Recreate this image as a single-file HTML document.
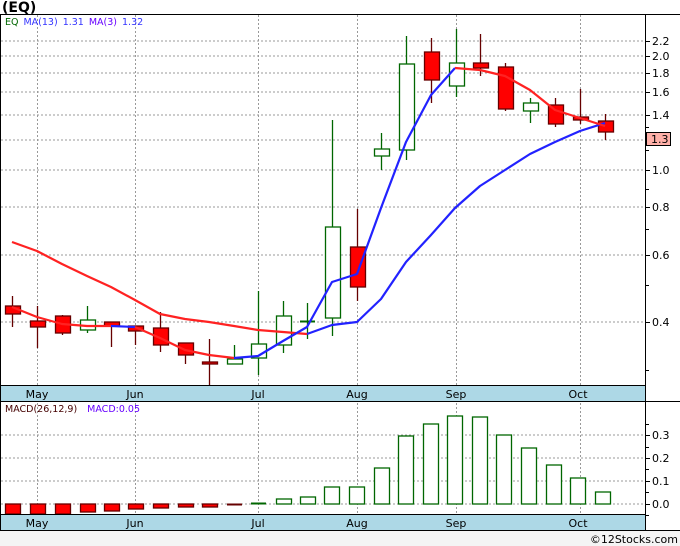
<!DOCTYPE html>
<html><head><style>
body{margin:0;background:#fff;}
svg text{font-family:"DejaVu Sans","Liberation Sans",sans-serif;}
</style></head><body>
<svg width="680" height="546" xmlns="http://www.w3.org/2000/svg" style="display:block">
<rect x="0" y="0" width="680" height="546" fill="#fff"/>
<rect x="0" y="531" width="680" height="15" fill="#f4f4f4"/>
<text x="2" y="12" font-size="14" font-weight="bold" fill="#000">(EQ)</text>
<g stroke="#999" stroke-width="1" stroke-dasharray="2,2">
<line x1="1" y1="41" x2="645" y2="41"/><line x1="1" y1="56" x2="645" y2="56"/><line x1="1" y1="73" x2="645" y2="73"/><line x1="1" y1="92" x2="645" y2="92"/><line x1="1" y1="115" x2="645" y2="115"/><line x1="1" y1="140" x2="645" y2="140"/><line x1="1" y1="170" x2="645" y2="170"/><line x1="1" y1="207" x2="645" y2="207"/><line x1="1" y1="255" x2="645" y2="255"/><line x1="1" y1="322" x2="645" y2="322"/>
<line x1="1" y1="435" x2="645" y2="435"/><line x1="1" y1="458" x2="645" y2="458"/><line x1="1" y1="481" x2="645" y2="481"/><line x1="1" y1="504" x2="645" y2="504"/>
<line x1="37.5" y1="15" x2="37.5" y2="530"/><line x1="135.5" y1="15" x2="135.5" y2="530"/><line x1="258.5" y1="15" x2="258.5" y2="530"/><line x1="357.5" y1="15" x2="357.5" y2="530"/><line x1="456.5" y1="15" x2="456.5" y2="530"/><line x1="580.5" y1="15" x2="580.5" y2="530"/>
</g>
<text x="5" y="25" font-size="9.5"><tspan fill="#060">EQ</tspan><tspan fill="#3333ff" dx="5">MA(13)</tspan><tspan fill="#3333ff" dx="5">1.31</tspan><tspan fill="#6600ff" dx="5">MA(3)</tspan><tspan fill="#3333ff" dx="5">1.32</tspan></text>
<g stroke-width="1.3">
<g stroke="#600">
<line x1="12.5" y1="296" x2="12.5" y2="327"/><rect x="5.5" y="306" width="15" height="8" fill="#f00"/>
<line x1="37.5" y1="306" x2="37.5" y2="348"/><rect x="30.5" y="321" width="15" height="6" fill="#f00"/>
<line x1="62.5" y1="315" x2="62.5" y2="335"/><rect x="55.5" y="316" width="15" height="17" fill="#f00"/>
<line x1="111.5" y1="322" x2="111.5" y2="347"/><rect x="104.5" y="322" width="15" height="4" fill="#f00"/>
<line x1="135.5" y1="326" x2="135.5" y2="345"/><rect x="128.5" y="326" width="15" height="5" fill="#f00"/>
<line x1="160.5" y1="312" x2="160.5" y2="352"/><rect x="153.5" y="328" width="15" height="17" fill="#f00"/>
<line x1="185.5" y1="343" x2="185.5" y2="364"/><rect x="178.5" y="343" width="15" height="12" fill="#f00"/>
<line x1="209.5" y1="339" x2="209.5" y2="387"/><rect x="202.5" y="362" width="15" height="2" fill="#f00"/>
<line x1="357.5" y1="209" x2="357.5" y2="301"/><rect x="350.5" y="247" width="15" height="40" fill="#f00"/>
<line x1="431.5" y1="38" x2="431.5" y2="103"/><rect x="424.5" y="52" width="15" height="28" fill="#f00"/>
<line x1="480.5" y1="34" x2="480.5" y2="76"/><rect x="473.5" y="63" width="15" height="5" fill="#f00"/>
<line x1="505.5" y1="63" x2="505.5" y2="111"/><rect x="498.5" y="67" width="15" height="42" fill="#f00"/>
<line x1="555.5" y1="98" x2="555.5" y2="127"/><rect x="548.5" y="105" width="15" height="19" fill="#f00"/>
<line x1="580.5" y1="89" x2="580.5" y2="124"/><rect x="573.5" y="117" width="15" height="3" fill="#f00"/>
<line x1="605.5" y1="114" x2="605.5" y2="140"/><rect x="598.5" y="121" width="15" height="11" fill="#f00"/>
</g>
<g stroke="#060">
<line x1="87.5" y1="306" x2="87.5" y2="333"/><rect x="80.5" y="320" width="15" height="10" fill="#fff"/>
<line x1="234.5" y1="345" x2="234.5" y2="364"/><rect x="227.5" y="359" width="15" height="5" fill="#fff"/>
<line x1="258.5" y1="291" x2="258.5" y2="375"/><rect x="251.5" y="344" width="15" height="14" fill="#fff"/>
<line x1="283.5" y1="301" x2="283.5" y2="353"/><rect x="276.5" y="316" width="15" height="29" fill="#fff"/>
<line x1="307.5" y1="303" x2="307.5" y2="339"/><line x1="300" y1="321.5" x2="315" y2="321.5" stroke-width="2"/>
<line x1="332.5" y1="120" x2="332.5" y2="336"/><rect x="325.5" y="227" width="15" height="91" fill="#fff"/>
<line x1="381.5" y1="133" x2="381.5" y2="170"/><rect x="374.5" y="149" width="15" height="7" fill="#fff"/>
<line x1="406.5" y1="36" x2="406.5" y2="160"/><rect x="399.5" y="64" width="15" height="86" fill="#fff"/>
<line x1="456.5" y1="29" x2="456.5" y2="97"/><rect x="449.5" y="63" width="15" height="23" fill="#fff"/>
<line x1="530.5" y1="98" x2="530.5" y2="123"/><rect x="523.5" y="103" width="15" height="8" fill="#fff"/>
</g>
</g>
<g fill="none" stroke-width="2.2" stroke-linejoin="round">
<polyline stroke="#f22" points="12,242 37,251 62,264 87,276 111,287 135,300 160,314 185,319 209,322 234,326 258,330 283,332 307,334"/>
<polyline stroke="#22f" points="307,334 332,325 357,322 381,299 406,262 431,235 455,208 480,186 505,170 530,154 555,142 580,131 605,123"/>
<polyline stroke="#f22" points="12,307 37,317 62,324 87,326 111,326"/>
<polyline stroke="#22f" points="111,326 135,327"/>
<polyline stroke="#f22" points="135,327 160,338 185,350 209,355 234,358"/>
<polyline stroke="#22f" points="234,358 258,356 283,341 307,327 332,282 357,274 381,208 406,142 431,95 455,68"/>
<polyline stroke="#f22" points="455,68 480,70 505,76 530,90 555,110 580,118 605,126"/>
</g>
<text x="5" y="412" font-size="9.5"><tspan fill="#400">MACD(26,12,9)</tspan><tspan fill="#6600ff" dx="10">MACD:0.05</tspan></text>
<g stroke-width="1.3">
<g stroke="#600" fill="#f00">
<rect x="5.5" y="504" width="15" height="10"/><rect x="30.5" y="504" width="15" height="10"/><rect x="55.5" y="504" width="15" height="10"/><rect x="80.5" y="504" width="15" height="8"/><rect x="104.5" y="504" width="15" height="7"/><rect x="128.5" y="504" width="15" height="5"/><rect x="153.5" y="504" width="15" height="4"/><rect x="178.5" y="504" width="15" height="3"/><rect x="202.5" y="504" width="15" height="3"/>
<line x1="227" y1="504.5" x2="242" y2="504.5" stroke-width="2"/>
</g>
<line x1="251" y1="503.5" x2="266" y2="503.5" stroke="#060" stroke-width="2"/>
<g stroke="#060" fill="#fff">
<rect x="276.5" y="499" width="15" height="5"/><rect x="300.5" y="497" width="15" height="7"/><rect x="324.5" y="487" width="15" height="17"/><rect x="349.5" y="487" width="15" height="17"/><rect x="374.5" y="468" width="15" height="36"/><rect x="398.5" y="436" width="15" height="68"/><rect x="423.5" y="424" width="15" height="80"/><rect x="447.5" y="416" width="15" height="88"/><rect x="472.5" y="417" width="15" height="87"/><rect x="496.5" y="435" width="15" height="69"/><rect x="521.5" y="448" width="15" height="56"/><rect x="546.5" y="465" width="15" height="39"/><rect x="570.5" y="478" width="15" height="26"/><rect x="595.5" y="492" width="15" height="12"/>
</g>
</g>
<rect x="1" y="386" width="645" height="15" fill="#add8e6"/>
<rect x="1" y="515" width="645" height="15" fill="#add8e6"/>
<g font-size="11" fill="#000" text-anchor="middle">
<text x="37" y="398">May</text><text x="135" y="398">Jun</text><text x="258" y="398">Jul</text><text x="357" y="398">Aug</text><text x="456" y="398">Sep</text><text x="578" y="398">Oct</text>
<text x="37" y="527">May</text><text x="135" y="527">Jun</text><text x="258" y="527">Jul</text><text x="357" y="527">Aug</text><text x="456" y="527">Sep</text><text x="578" y="527">Oct</text>
</g>
<g stroke="#000" stroke-width="1">
<line x1="0" y1="14.5" x2="680" y2="14.5"/>
<line x1="0.5" y1="14" x2="0.5" y2="531"/>
<line x1="0" y1="385.5" x2="646" y2="385.5"/>
<line x1="0" y1="401.5" x2="680" y2="401.5"/>
<line x1="0" y1="514.5" x2="646" y2="514.5"/>
<line x1="0" y1="530.5" x2="680" y2="530.5"/>
<line x1="645.5" y1="14" x2="645.5" y2="531"/>
</g>
<g stroke="#000">
<line x1="645" y1="41.5" x2="650" y2="41.5"/><line x1="645" y1="56.5" x2="650" y2="56.5"/><line x1="645" y1="73.5" x2="650" y2="73.5"/><line x1="645" y1="92.5" x2="650" y2="92.5"/><line x1="645" y1="115.5" x2="650" y2="115.5"/><line x1="645" y1="127.5" x2="649" y2="127.5"/><line x1="645" y1="140.5" x2="650" y2="140.5"/><line x1="645" y1="150.5" x2="649" y2="150.5"/><line x1="645" y1="170.5" x2="650" y2="170.5"/><line x1="645" y1="189.5" x2="649" y2="189.5"/><line x1="645" y1="207.5" x2="650" y2="207.5"/><line x1="645" y1="229.5" x2="649" y2="229.5"/><line x1="645" y1="255.5" x2="650" y2="255.5"/><line x1="645" y1="285.5" x2="649" y2="285.5"/><line x1="645" y1="322.5" x2="650" y2="322.5"/><line x1="645" y1="370.5" x2="649" y2="370.5"/>
<line x1="645" y1="424.5" x2="649" y2="424.5"/><line x1="645" y1="435.5" x2="650" y2="435.5"/><line x1="645" y1="447.5" x2="649" y2="447.5"/><line x1="645" y1="458.5" x2="650" y2="458.5"/><line x1="645" y1="469.5" x2="649" y2="469.5"/><line x1="645" y1="481.5" x2="650" y2="481.5"/><line x1="645" y1="492.5" x2="649" y2="492.5"/><line x1="645" y1="504.5" x2="650" y2="504.5"/><line x1="645" y1="515.5" x2="649" y2="515.5"/>
</g>
<g font-size="11" fill="#000">
<text x="652" y="45">2.2</text><text x="652" y="60">2.0</text><text x="652" y="77">1.8</text><text x="652" y="96">1.6</text><text x="652" y="119">1.4</text><text x="652" y="174">1.0</text><text x="652" y="211">0.8</text><text x="652" y="259">0.6</text><text x="652" y="326">0.4</text>
<text x="652" y="439">0.3</text><text x="652" y="462">0.2</text><text x="652" y="485">0.1</text><text x="652" y="508">0.0</text>
</g>
<rect x="646.5" y="132.5" width="24" height="13" fill="#ffb0a8" stroke="#000"/>
<text x="651" y="143" font-size="11" fill="#000">1.3</text>
<text x="678" y="543" font-size="11" fill="#000" text-anchor="end">©12Stocks.com</text>
</svg>
</body></html>
